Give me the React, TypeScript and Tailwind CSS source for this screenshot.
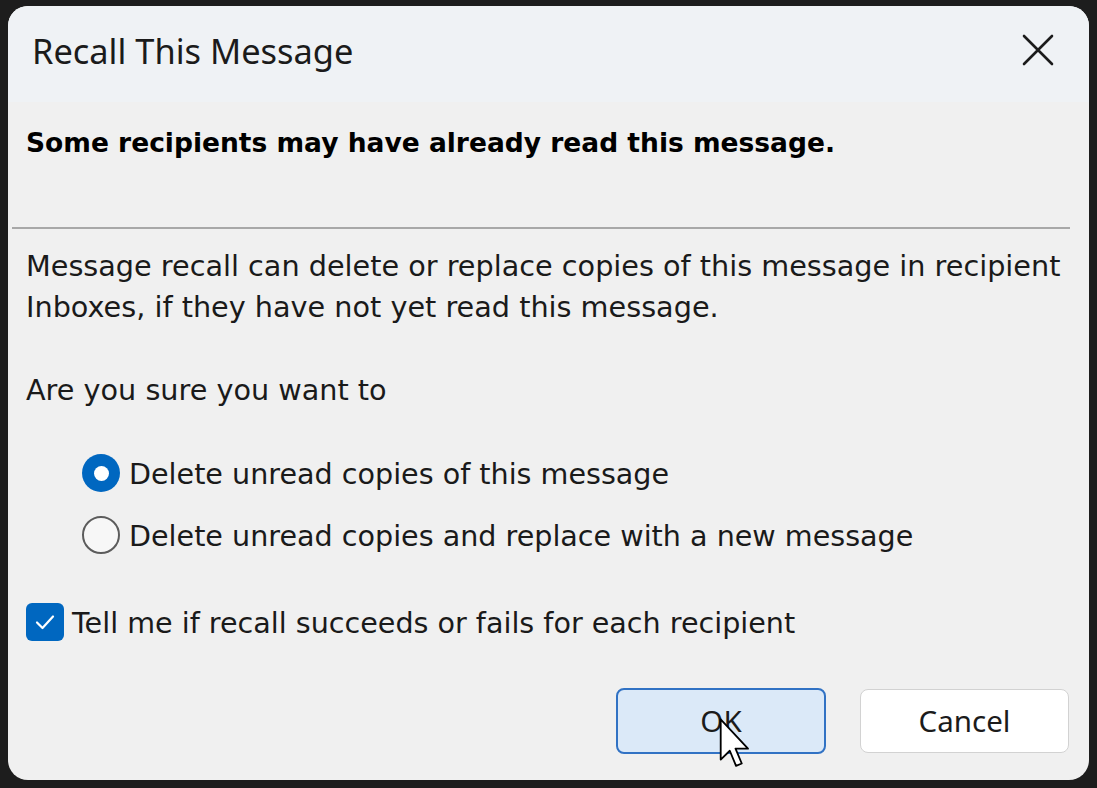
import React from "react";

const ui = { fontFamily: '"Noto Sans", "Open Sans", sans-serif' };
const body = { fontFamily: '"DejaVu Sans", Verdana, sans-serif' };

function Radio({ checked, label }: { checked: boolean; label: string }) {
  return (
    <div className="flex items-center h-[38px]">
      {checked ? (
        <div className="w-[38px] h-[38px] rounded-full bg-[#0067c0] flex items-center justify-center shrink-0">
          <div className="w-[15px] h-[15px] rounded-full bg-white" />
        </div>
      ) : (
        <div className="w-[38px] h-[38px] rounded-full border-[2px] border-[#5c5c5c] bg-[#f7f7f7] shrink-0" />
      )}
      <span className="ml-[9px] text-[28.6px] leading-[38px] pt-[2px] text-[#1a1a1a] whitespace-nowrap">{label}</span>
    </div>
  );
}

export default function App() {
  return (
    <div className="w-[1097px] h-[788px] bg-[#1d1d1d] pt-[6px] pl-[8px]" style={ui}>
      <div className="relative w-[1081px] h-[774px] rounded-[20px] bg-[#f0f0f0] overflow-hidden flex flex-col">
        <div className="h-[96px] bg-[#eff2f5] flex items-start justify-between pl-[24px] pr-[35px] pt-[25px]">
          <span className="text-[34.4px] leading-[40px] text-[#1b1b1b]">Recall This Message</span>
          <svg width="32" height="32" viewBox="0 0 32 32" className="mt-[3px]">
            <path d="M2 2 L30 30 M30 2 L2 30" stroke="#1b1b1b" strokeWidth="2.6" strokeLinecap="round" />
          </svg>
        </div>
        <div className="px-[18px] pt-[26px] text-[#141414]" style={body}>
          <div className="text-[26.5px] font-bold leading-[30px] text-black whitespace-nowrap">Some recipients may have already read this message.</div>
          <div className="mt-[69px] h-[2px] bg-[#a8a8a8] mr-[1px] ml-[-14px]" />
          <div className="mt-[17px] text-[28.7px] leading-[41px] text-[#1a1a1a] whitespace-nowrap">
            Message recall can delete or replace copies of this message in recipient
            <br />
            Inboxes, if they have not yet read this message.
          </div>
          <div className="mt-[42px] text-[28.7px] leading-[41px] text-[#1a1a1a]">Are you sure you want to</div>
          <div className="mt-[43px] ml-[56px] flex flex-col gap-[24px]">
            <Radio checked label="Delete unread copies of this message" />
            <Radio checked={false} label="Delete unread copies and replace with a new message" />
          </div>
          <div className="mt-[49px] flex items-center h-[38px]">
            <div className="w-[38px] h-[38px] rounded-[6px] bg-[#0067c0] flex items-center justify-center shrink-0">
              <svg width="24" height="24" viewBox="0 0 24 24">
                <path d="M4 12.5 L9.5 18 L20 6.5" stroke="white" strokeWidth="2.2" fill="none" strokeLinecap="round" strokeLinejoin="round" />
              </svg>
            </div>
            <span className="ml-[8px] text-[28.6px] leading-[38px] pt-[2px] text-[#1a1a1a] whitespace-nowrap">Tell me if recall succeeds or fails for each recipient</span>
          </div>
        </div>
        <div className="mt-auto mb-[26px] flex justify-end gap-[34px] pr-[20px]">
          <button className="w-[210px] h-[66px] rounded-[8px] border-[2px] border-[#3172c4] bg-[#dbe9f8] text-[29.5px] text-[#1b1b1b]">
            OK
          </button>
          <button className="w-[209px] h-[64px] rounded-[8px] border border-[#d2d2d2] bg-white text-[29.5px] text-[#1b1b1b] mt-[1px]">
            Cancel
          </button>
        </div>
        <svg className="absolute left-[711px] top-[712px]" width="32" height="52" viewBox="0 0 12 20">
          <path d="M0.5 0.5 L0.5 16 L4 12.6 L6.4 18.4 L8.6 17.5 L6.2 11.8 L11 11.8 Z" fill="white" stroke="black" strokeWidth="0.7" strokeLinejoin="round" />
        </svg>
      </div>
    </div>
  );
}
